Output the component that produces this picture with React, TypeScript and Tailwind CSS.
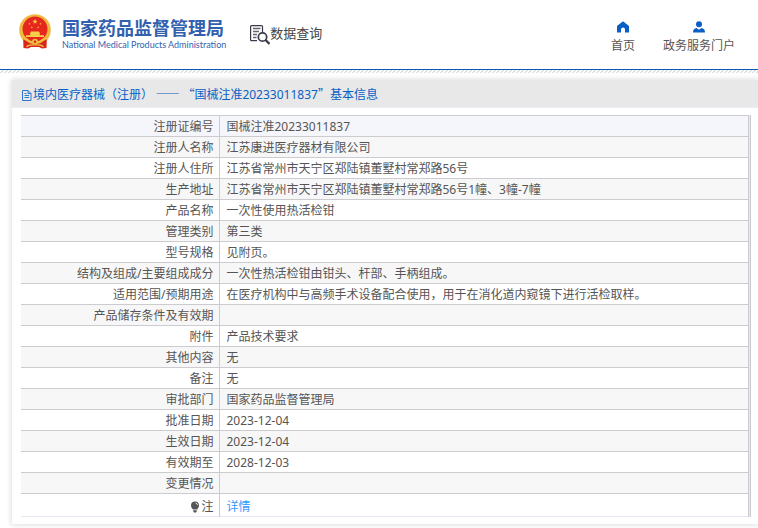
import { useId } from 'react'

type Row = { label: string; value: string }

const rows: Row[] = [
  { label: '注册证编号', value: '国械注准20233011837' },
  { label: '注册人名称', value: '江苏康进医疗器材有限公司' },
  { label: '注册人住所', value: '江苏省常州市天宁区郑陆镇董墅村常郑路56号' },
  { label: '生产地址', value: '江苏省常州市天宁区郑陆镇董墅村常郑路56号1幢、3幢-7幢' },
  { label: '产品名称', value: '一次性使用热活检钳' },
  { label: '管理类别', value: '第三类' },
  { label: '型号规格', value: '见附页。' },
  { label: '结构及组成/主要组成成分', value: '一次性热活检钳由钳头、杆部、手柄组成。' },
  { label: '适用范围/预期用途', value: '在医疗机构中与高频手术设备配合使用，用于在消化道内窥镜下进行活检取样。' },
  { label: '产品储存条件及有效期', value: '' },
  { label: '附件', value: '产品技术要求' },
  { label: '其他内容', value: '无' },
  { label: '备注', value: '无' },
  { label: '审批部门', value: '国家药品监督管理局' },
  { label: '批准日期', value: '2023-12-04' },
  { label: '生效日期', value: '2023-12-04' },
  { label: '有效期至', value: '2028-12-03' },
  { label: '变更情况', value: '' },
]

const STAR = 'M0-1 .23-.31.95-.31.36.12.59.81 0 .38-.59.81-.36.12-.95-.31-.23-.31Z'

function Emblem() {
  return (
    <svg viewBox="0 0 32 35" className="h-[35px] w-8 shrink-0" aria-hidden="true">
      <circle cx="16" cy="16" r="15.8" fill="#f3bd42" />
      <circle cx="16" cy="16" r="14.4" fill="none" stroke="#e8a936" strokeWidth=".8" strokeDasharray="2 1" />
      <circle cx="16" cy="15" r="12.500" fill="#e5271d" />
      <g fill="#f8cf4a">
        <path d={STAR} transform="translate(16 7.6) scale(2.8)" />
        <path d={STAR} transform="translate(10.5 9.8) scale(1.3)" />
        <path d={STAR} transform="translate(21.500 9.8) scale(1.3)" />
        <path d={STAR} transform="translate(12.800 13.3) scale(1.2)" />
        <path d={STAR} transform="translate(19.200 13.3) scale(1.2)" />
        <path d="M12 17.500h8l.8 1.500v2.200h4.200V23H7v-1.800h4.200V19Z" />
      </g>
      <path d="M4.200 25.500C7 25.800 8.500 28.800 12 29.500h8c3.500-.7 5-3.700 7.800-4L27.500 34l-4.500.5-3-1.500h-8l-3 1.500-4.500-.5Z" fill="#d8261c" />
      <path d="M6 24.500c3 .2 4 3.800 7.500 4h5c3.500-.2 4.500-3.800 7.500-4" fill="none" stroke="#f3bd42" strokeWidth="1.300" />
      <circle cx="16" cy="27.800" r="3" fill="#f3bd42" />
      <circle cx="16" cy="27.800" r="1.200" fill="#d8261c" />
      <path d="M7.500 33c2-2.800 4.500-2 8.500-2s6.500-.8 8.500 2" fill="none" stroke="#f3bd42" strokeWidth="1.200" />
    </svg>
  )
}

function SearchDocIcon() {
  return (
    <svg viewBox="0 0 20 20" className="h-5 w-5" fill="none" stroke="#3b3a4b" aria-hidden="true">
      <path d="M12.500 7V1.500q0-.9-.9-.9H1.500q-.9 0-.9.9v13.300q0 .9.9.9H7" strokeWidth="1.200" />
      <path d="M3 3.500h7.500M3 6.500h6M3 9.500h4M3 12.500h3.500" strokeWidth="1.300" stroke="#66656f" />
      <circle cx="12.500" cy="12" r="4.200" strokeWidth="1.700" />
      <path d="m15.500 15 4 4" strokeWidth="2.300" />
    </svg>
  )
}

function HomeIcon() {
  return (
    <svg viewBox="0 0 12 12" className="h-3 w-3" fill="#0a5fc4" aria-hidden="true">
      <path d="M6 .3 12 5v6.500H8V8.500a2 2 0 0 0-4 0v3H0V5Z" />
    </svg>
  )
}

function UserIcon() {
  return (
    <svg viewBox="0 0 12 12" className="h-3 w-3" fill="#0a5fc4" aria-hidden="true">
      <circle cx="6" cy="3.200" r="3" />
      <path d="M0 11.500C0 8.500 1.500 7.300 3.500 7L6 8.800 8.500 7c2 .3 3.500 1.500 3.500 4.500Z" />
    </svg>
  )
}

function FileIcon() {
  return (
    <svg viewBox="0 0 12 12" className="h-3 w-3" fill="none" stroke="#3277cf" aria-hidden="true">
      <path d="M1.500 1.500h5.500l3 3v7H1.500ZM7 1.500v3h3M3.500 4.500h2M3.500 6.500H8M3.500 8.500H8" strokeWidth="1" />
    </svg>
  )
}

function BulbIcon() {
  return (
    <svg viewBox="0 0 10 12" className="h-3 w-2.5" aria-hidden="true">
      <path d="M5 .5a4 4 0 0 1 4 4c0 2-1.200 2.700-1.800 4H2.800C2.200 7.200 1 6.500 1 4.500a4 4 0 0 1 4-4ZM3.200 9.300h3.600v1L6 11.500H4l-.8-1.200Z" fill="#555" />
      <path d="M5.500 2q2 .3 2.100 2.200" stroke="#fff" strokeWidth=".8" fill="none" />
    </svg>
  )
}

// thin hatched strip under the header line
function Hatch() {
  const id = useId()
  return (
    <svg className="block h-[3px] w-full" aria-hidden="true">
      <defs>
        <pattern id={id} width="4" height="3" patternUnits="userSpaceOnUse">
          <path d="M2 0h2v1H2ZM1 1h2v1H1ZM0 2h2v1H0Z" fill="#e0e0e0" />
        </pattern>
      </defs>
      <rect width="100%" height="3" fill={`url(#${id})`} />
    </svg>
  )
}

function Header() {
  return (
    <header className="border-b border-[#0a5cb5]">
      <div className="flex items-start pt-3.5 pr-[23px] pb-[13px] pl-[19px]">
        <a href="#" className="flex items-start gap-[11px] text-[#325fae]">
          <Emblem />
          <span className="flex flex-col pt-1 whitespace-nowrap">
            <span className="text-[18px] leading-5 font-bold">国家药品监督管理局</span>
            <span className="font-['Lato','Liberation_Sans',sans-serif] text-[9px] leading-[14px]">
              National Medical Products Administration
            </span>
          </span>
        </a>
        <a href="#" className="ml-6 flex items-start pt-[9px] text-[13px] leading-5 whitespace-nowrap text-[#444]">
          <span className="pt-0.5"><SearchDocIcon /></span>
          数据查询
        </a>
        <nav className="ml-auto flex gap-7 pt-[7px] leading-5 text-[#555]">
          <a href="#" className="flex flex-col items-center gap-[3px]">
            <HomeIcon />
            首页
          </a>
          <a href="#" className="flex flex-col items-center gap-[3px]">
            <UserIcon />
            政务服务门户
          </a>
        </nav>
      </div>
    </header>
  )
}

function InfoTable() {
  return (
    <div className="mt-[7px] mr-[7px] ml-[9px] border-r border-[#ccccd0] bg-[#e8e8ef] pr-px">
      <table className="w-full border-collapse bg-white leading-[18px] text-[#555]">
        <tbody>
          {rows.map((row, i) => (
            <tr
              key={row.label}
              className={`border-t border-[#ccccd0] ${i === 0 ? 'bg-[#f5f6fb]' : i % 2 ? 'bg-[#f7f7f7]' : 'bg-white'}`}
            >
              <th scope="row" className="h-[21px] w-[198px] border-r border-[#ccccd0] pt-0.5 pr-[5px] pb-0 text-right font-normal">
                {row.label}
              </th>
              <td className="border-r border-[#ccccd0] pt-0.5 pb-0 pl-[7px]">{row.value}</td>
            </tr>
          ))}
          <tr className="border-t border-b border-t-[#ccccd0] border-b-[#e8e8f2]">
            <th scope="row" className="h-[23px] border-r border-[#ccccd0] pt-[3px] pr-[5px] pb-0 font-normal">
              <span className="flex items-center justify-end gap-px">
                <BulbIcon />
                注
              </span>
            </th>
            <td className="border-r border-[#ccccd0] pt-1 pb-0 pl-[7px]">
              <a href="#" className="text-[#3399ff]">详情</a>
            </td>
          </tr>
        </tbody>
      </table>
    </div>
  )
}

export default function App() {
  return (
    <div className="min-h-screen overflow-x-hidden bg-white font-['Noto_Sans','Noto_Sans_CJK_SC',sans-serif] text-xs leading-5" lang="zh-CN">
      <Header />
      <Hatch />
      <main className="pt-[7px] pb-1 pl-3">
        <section className="bg-white pb-[7px] shadow-[0_0_5px_1px_rgba(0,0,0,0.13)]">
          <div className="flex items-center border-b border-[#ececf4] bg-[#e8e8e8] pt-1 pb-0.5 pl-[9px] whitespace-nowrap text-[#0a5fc4]">
            <FileIcon />
            <h1 className="font-['Noto_Sans_CJK_SC',sans-serif]">
              境内医疗器械（注册） —— “国械注准
              <span className="font-['Noto_Sans','Noto_Sans_CJK_SC',sans-serif]">20233011837</span>
              ”基本信息
            </h1>
          </div>
          <InfoTable />
        </section>
      </main>
    </div>
  )
}
